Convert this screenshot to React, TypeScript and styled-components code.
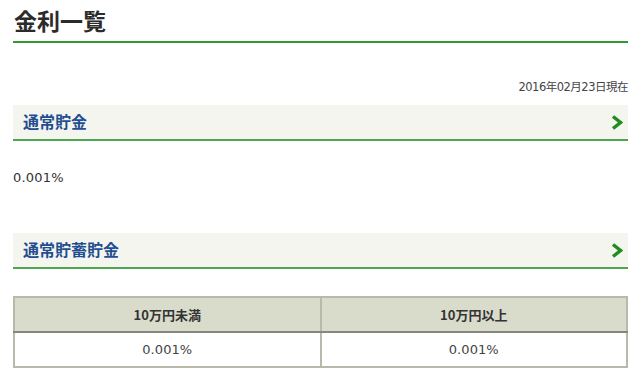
import React from "react";
import styled, { createGlobalStyle } from "styled-components";

const Global = createGlobalStyle`
  html, body { margin: 0; padding: 0; background: #fff; }
  body { font-family: "Noto Sans CJK JP", "Noto Sans", sans-serif; color: #333; }
`;

const Page = styled.div`
  width: 615px;
  padding: 0 12px 0 13px;
`;

const Title = styled.h1`
  margin: 0;
  padding: 4px 0 5px 1px;
  font-size: 23px;
  line-height: 32px;
  font-weight: 700;
  color: #2b2b2b;
  border-bottom: 2px solid #2f9a2f;
`;

const DateLine = styled.div`
  margin-top: 37px;
  text-align: right;
  font-size: 11.5px;
  line-height: 15px;
  color: #444;
  font-family: "DejaVu Sans", "Noto Sans CJK JP", sans-serif;
  letter-spacing: -0.5px;
`;

const SectionHeader = styled.div<{ $top: number }>`
  margin-top: ${(p) => p.$top}px;
  height: 34px;
  background: #f5f5ef;
  border-bottom: 2px solid #4ea64e;
  display: flex;
  align-items: center;
  justify-content: space-between;
  padding: 0 5px 0 10px;
`;

const SectionTitle = styled.span`
  font-size: 16px;
  line-height: 20px;
  margin-top: -2px;
  font-weight: 700;
  color: #1f4f91;
`;

const Value = styled.div`
  margin-top: 29px;
  font-size: 13px;
  line-height: 16px;
  letter-spacing: 0.2px;
  color: #333;
  font-family: "DejaVu Sans", "Noto Sans CJK JP", sans-serif;
`;

const Table = styled.table`
  margin-top: 27px;
  width: 100%;
  border-collapse: collapse;
  border: 2px solid #b9b9ab;
`;

const Th = styled.th`
  height: 33px;
  padding: 0;
  background: #d9dbcb;
  border-left: 2px solid #b9b9ab;
  border-bottom: 2px solid #86877a;
  font-size: 13px;
  font-weight: 700;
  color: #333;
  &:first-child { border-left: none; }
`;

const Td = styled.td`
  height: 33px;
  padding: 0;
  text-align: center;
  border-left: 2px solid #b9b9ab;
  font-size: 13px;
  letter-spacing: 0.1px;
  color: #444;
  font-family: "DejaVu Sans", "Noto Sans CJK JP", sans-serif;
  &:first-child { border-left: none; }
`;

const Chevron = () => (
  <svg width="12" height="15" viewBox="0 0 12 15">
    <path d="M2 1.5 L9.5 7.5 L2 13.5" fill="none" stroke="#1e8c1e" strokeWidth="3.4" strokeLinejoin="miter" />
  </svg>
);

export default function App() {
  return (
    <>
      <Global />
      <Page>
        <Title>金利一覧</Title>
        <DateLine>2016年02月23日現在</DateLine>
        <SectionHeader $top={10}>
          <SectionTitle>通常貯金</SectionTitle>
          <Chevron />
        </SectionHeader>
        <Value>0.001%</Value>
        <SectionHeader $top={47}>
          <SectionTitle>通常貯蓄貯金</SectionTitle>
          <Chevron />
        </SectionHeader>
        <Table>
          <thead>
            <tr>
              <Th>10万円未満</Th>
              <Th>10万円以上</Th>
            </tr>
          </thead>
          <tbody>
            <tr>
              <Td>0.001%</Td>
              <Td>0.001%</Td>
            </tr>
          </tbody>
        </Table>
      </Page>
    </>
  );
}
